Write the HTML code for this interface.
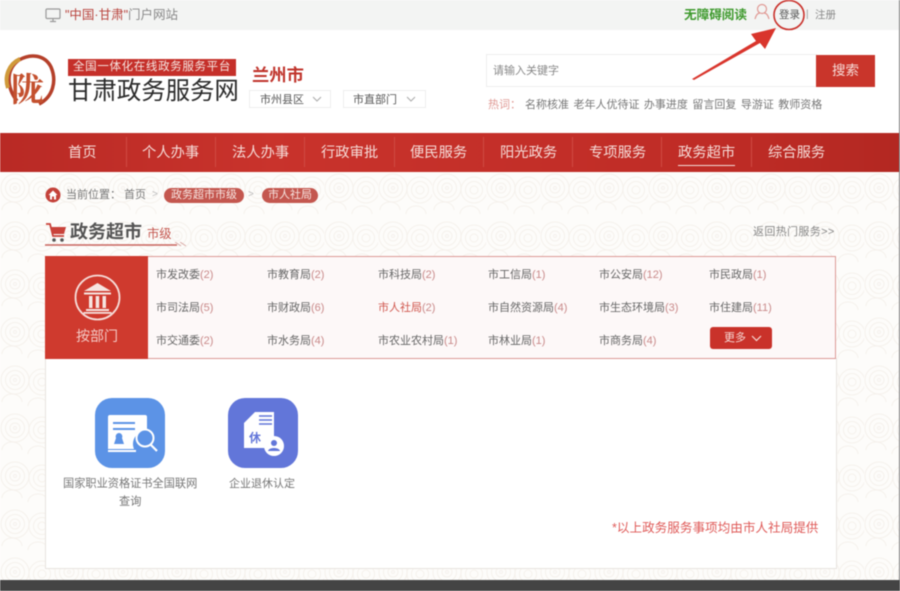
<!DOCTYPE html>
<html lang="zh"><head><meta charset="utf-8"><style>
*{margin:0;padding:0;box-sizing:border-box}
html,body{width:900px;height:591px;overflow:hidden;background:#fff}
body{position:relative;font-family:"Liberation Sans","Noto Sans CJK SC",sans-serif;color:#666;filter:blur(.5px)}
.a{position:absolute;white-space:nowrap;line-height:1}
.nav{position:absolute;top:146px;color:#f6dcd8;font-size:14.300px;line-height:1}
.sep{position:absolute;top:137px;width:1px;height:30px;background:#cf4a42}
.it{position:absolute;font-size:11px;line-height:1;white-space:nowrap;color:#666}
.it b{font-weight:normal;color:#c98a8a}
</style></head><body>
<svg class="a" style="left:0;top:172px" width="900" height="408">
<defs><pattern id="p" width="54" height="48" patternUnits="userSpaceOnUse">
<g fill="none" stroke="#f5f1ec" stroke-width="1">
<circle cx="15" cy="16" r="14"/><circle cx="15" cy="16" r="9.500"/><circle cx="15" cy="16" r="5"/><circle cx="15" cy="16" r="1.500"/>
<circle cx="42" cy="18" r="13"/><circle cx="42" cy="18" r="8.500"/><circle cx="42" cy="18" r="4"/>
<path d="M2 38a10 8 0 0 1 20 0M28 42a10 8 0 0 1 20 0"/></g></pattern></defs>
<rect width="900" height="408" fill="#fdfcfa"/><rect width="900" height="408" fill="url(#p)"/></svg>

<div class="a" style="left:0;top:0;width:900px;height:30px;background:#f3f4f3"></div>
<svg class="a" style="left:45px;top:8px" width="17" height="15" fill="none" stroke="#999" stroke-width="1.200"><rect x="1" y="1" width="14" height="9.500" rx="1"/><path d="M5 13.500h6M8 10.500v3"/></svg>
<div class="a" style="left:65px;top:9px;font-size:12.500px"><span style="color:#b8423c">"中国·甘肃"</span><span style="color:#888">门户网站</span></div>
<div class="a" style="left:684px;top:9px;font-size:12.600px;font-weight:bold;color:#3f9a2e">无障碍阅读</div>
<svg class="a" style="left:754px;top:3px" width="16" height="17" fill="none" stroke="#e09a95" stroke-width="1.200"><circle cx="8" cy="6" r="4.500"/><path d="M1 16c1-4 3-6 5-6M15 16c-1-4-3-6-5-6"/></svg>
<div class="a" style="left:779px;top:10px;font-size:10.500px;color:#555">登录</div>
<div class="a" style="left:806px;top:10px;font-size:10px;color:#999">|</div>
<div class="a" style="left:815px;top:10px;font-size:10.500px;color:#888">注册</div>

<svg class="a" style="left:3px;top:52px" width="54" height="56" fill="none"><path d="M14 49C4 36 2 18 16 8c12-7 26-5 32 7 6 14 2 30-12 37" stroke="#b5402a" stroke-width="3.500"/><path d="M5 36C1 24 6 12 17 7" stroke="#d09a3a" stroke-width="4"/><text x="8" y="49" font-size="33" font-family="Liberation Serif,Noto Serif CJK SC,serif" font-weight="bold" fill="#c4512f">陇</text></svg>
<div class="a" style="left:68px;top:59px;width:168px;height:17px;background:#c5302a;color:#f6e4e0;font-size:11.500px;line-height:17px;text-align:center;letter-spacing:.65px">全国一体化在线政务服务平台</div>
<div class="a" style="left:68px;top:80px;font-size:24.500px;color:#2b2b2b;letter-spacing:-.1px">甘肃政务服务网</div>
<div class="a" style="left:252px;top:67px;font-size:17.300px;font-weight:bold;color:#c0342c">兰州市</div>
<div class="a" style="left:249px;top:90px;width:82px;height:18px;border:1px solid #eee;background:#fff;font-size:11px;line-height:18px;padding-left:10px;color:#555">市州县区</div>
<div class="a" style="left:343px;top:90px;width:83px;height:18px;border:1px solid #eee;background:#fff;font-size:11px;line-height:18px;padding-left:9px;color:#555">市直部门</div>
<svg class="a" style="left:312px;top:96px" width="116" height="8" fill="none" stroke="#aaa"><path d="M1 1l4 4 4-4M95 1l4 4 4-4"/></svg>

<div class="a" style="left:486px;top:54px;width:331px;height:33px;border:1px solid #eee;background:#fff;font-size:11px;line-height:33px;padding-left:6px;color:#888">请输入关键字</div>
<div class="a" style="left:816px;top:55px;width:59px;height:32px;background:#c9352b;color:#f7dcd8;font-size:13.500px;line-height:32px;text-align:center">搜索</div>
<div class="a" style="left:488px;top:100px;font-size:11px;color:#e09a95">热词：</div>
<div class="a" style="left:525px;top:100px;font-size:11px;color:#777;word-spacing:1.400px">名称核准 老年人优待证 办事进度 留言回复 导游证 教师资格</div>

<svg class="a" style="left:0;top:133px" width="900" height="39"><defs><linearGradient id="g" x1="0" x2="1"><stop offset="0" stop-color="#b92a25"/><stop offset=".3" stop-color="#c9332c"/><stop offset=".8" stop-color="#bf2c26"/><stop offset="1" stop-color="#b32822"/></linearGradient></defs><rect width="900" height="39" fill="url(#g)"/></svg>
<div class="nav" style="left:68px">首页</div><div class="sep" style="left:126px"></div>
<div class="nav" style="left:142px">个人办事</div><div class="sep" style="left:215px"></div>
<div class="nav" style="left:232px">法人办事</div><div class="sep" style="left:304px"></div>
<div class="nav" style="left:321px">行政审批</div><div class="sep" style="left:394px"></div>
<div class="nav" style="left:410px">便民服务</div><div class="sep" style="left:483px"></div>
<div class="nav" style="left:500px">阳光政务</div><div class="sep" style="left:572px"></div>
<div class="nav" style="left:589px">专项服务</div><div class="sep" style="left:661px"></div>
<div class="nav" style="left:678px">政务超市</div><div class="sep" style="left:751px"></div>
<div class="a" style="left:678px;top:165px;width:57px;height:1px;background:#f3dcd8"></div>
<div class="nav" style="left:768px">综合服务</div>

<svg class="a" style="left:45px;top:187px" width="16" height="16"><circle cx="8" cy="8" r="7.500" fill="#c4423a"/><path d="M3.500 8L8 3.500 12.500 8h-1.500v4.500H9V9.500H7v3H5V8z" fill="#fff"/></svg>
<div class="a" style="left:66px;top:190px;font-size:11px;color:#777">当前位置：</div>
<div class="a" style="left:124px;top:190px;font-size:11px;color:#777">首页</div>
<div class="a" style="left:152px;top:190px;font-size:10px;color:#bbb">&gt;</div>
<div class="a" style="left:164px;top:188px;width:80px;height:15px;border-radius:8px;background:#c4574f;color:#f7e4e0;font-size:11px;line-height:15px;text-align:center">政务超市市级</div>
<div class="a" style="left:248px;top:190px;font-size:10px;color:#bbb">&gt;</div>
<div class="a" style="left:262px;top:188px;width:56px;height:15px;border-radius:8px;background:#c4574f;color:#f7e4e0;font-size:11px;line-height:15px;text-align:center">市人社局</div>

<svg class="a" style="left:45px;top:221px" width="24" height="24" fill="none"><path d="M1 3h4l3 12h11" stroke="#c9423a" stroke-width="1.800"/><path d="M6 6h15l-2 7H8z" fill="#c9423a"/><circle cx="9" cy="19" r="1.800" fill="#555"/><circle cx="17" cy="19" r="1.800" fill="#555"/></svg>
<div class="a" style="left:70px;top:223px;font-size:18px;font-weight:bold;color:#555">政务超市</div>
<div class="a" style="left:147px;top:228px;font-size:12.300px;color:#c4574f">市级</div>
<svg class="a" style="left:45px;top:242px" width="145" height="7" fill="none"><path d="M0 3h132" stroke="#c9655e" stroke-width="1.500"/><path d="M130 0l6 4M135 0l6 4" stroke="#d9a9a5"/></svg>
<div class="a" style="left:753px;top:227px;font-size:11px;color:#888;letter-spacing:.35px">返回热门服务&gt;&gt;</div>

<div class="a" style="left:45px;top:358px;width:792px;height:211px;background:#fff;border:1px solid #e8e4e0;border-top:0"></div>
<div class="a" style="left:45px;top:256px;width:791px;height:103px;background:#fdf8f8;border:1px solid #dc9a96"></div>
<div class="a" style="left:45px;top:256px;width:103px;height:103px;background:#cf3a2e"></div>
<svg class="a" style="left:74px;top:274px" width="48" height="48" fill="none"><circle cx="23.500" cy="23.500" r="22" stroke="#f6dcd8" stroke-width="1.800"/><path d="M23.500 9L37 17H10z" fill="#f6e4e0"/><path d="M10 18.500h27v2H10zM12 35h23v2H12zM9.500 38h28v1.800H9.500z" fill="#f6e4e0"/><path d="M15 22h3.500v12H15zM21.700 22h3.500v12h-3.500zM28.500 22H32v12h-3.500z" fill="#f6e4e0"/></svg>
<div class="a" style="left:76px;top:329px;font-size:14px;color:#f3c9c4">按部门</div>

<div class="it" style="left:156px;top:270px">市发改委<b>(2)</b></div>
<div class="it" style="left:267px;top:270px">市教育局<b>(2)</b></div>
<div class="it" style="left:378px;top:270px">市科技局<b>(2)</b></div>
<div class="it" style="left:488px;top:270px">市工信局<b>(1)</b></div>
<div class="it" style="left:599px;top:270px">市公安局<b>(12)</b></div>
<div class="it" style="left:709px;top:270px">市民政局<b>(1)</b></div>
<div class="it" style="left:156px;top:303px">市司法局<b>(5)</b></div>
<div class="it" style="left:267px;top:303px">市财政局<b>(6)</b></div>
<div class="it" style="left:378px;top:303px;color:#d0574e">市人社局<b>(2)</b></div>
<div class="it" style="left:488px;top:303px">市自然资源局<b>(4)</b></div>
<div class="it" style="left:599px;top:303px">市生态环境局<b>(3)</b></div>
<div class="it" style="left:709px;top:303px">市住建局<b>(11)</b></div>
<div class="it" style="left:156px;top:336px">市交通委<b>(2)</b></div>
<div class="it" style="left:267px;top:336px">市水务局<b>(4)</b></div>
<div class="it" style="left:378px;top:336px">市农业农村局<b>(1)</b></div>
<div class="it" style="left:488px;top:336px">市林业局<b>(1)</b></div>
<div class="it" style="left:599px;top:336px">市商务局<b>(4)</b></div>
<div class="a" style="left:710px;top:327px;width:62px;height:22px;border-radius:3px;background:#c9322a;color:#f6d8d4;font-size:11px;line-height:22px;padding-left:14px">更多</div>
<svg class="a" style="left:751px;top:335px" width="12" height="8" fill="none" stroke="#f6d8d4" stroke-width="1.200"><path d="M1 1l4.500 4.500L10 1"/></svg>

<svg class="a" style="left:95px;top:398px" width="70" height="70"><rect width="70" height="70" rx="17" fill="#5c93e6"/><path d="M13 19a2 2 0 0 1 2-2h35a2 2 0 0 1 2 2v14a13 13 0 0 0-13 18H13z" fill="#fff"/><path d="M18 24h22v2H18zM18 30h22v2H18z" fill="#5c93e6"/><path d="M24 35a3.500 3.500 0 0 1 3 5l2 6H19l2-6a3.500 3.500 0 0 1 3-5z" fill="#5c93e6"/><path d="M13 52h28v2H13z" fill="#fff"/><circle cx="50" cy="40" r="8.500" fill="#5c93e6" stroke="#fff" stroke-width="2"/><path d="M56 47l6 6" stroke="#fff" stroke-width="2.200"/></svg>
<svg class="a" style="left:228px;top:398px" width="70" height="70"><rect width="70" height="70" rx="17" fill="#6276d9"/><path d="M27 14h19v26h-4l-2 10H16V25z" fill="#fff"/><path d="M31 18h13M31 22h13M31 26h13" stroke="#6276d9" stroke-width="1.500"/><circle cx="46" cy="48" r="10" fill="#fff"/><circle cx="46" cy="45" r="3" fill="#6276d9"/><path d="M40 53c1-4 11-4 12 0z" fill="#6276d9"/><text x="21" y="44" font-size="12" font-weight="bold" fill="#6276d9" font-family="Liberation Sans,Noto Sans CJK SC,sans-serif">休</text></svg>
<div class="a" style="left:63px;top:479px;font-size:11.200px;color:#777">国家职业资格证书全国联网</div>
<div class="a" style="left:119px;top:497px;font-size:11.200px;color:#777">查询</div>
<div class="a" style="left:229px;top:479px;font-size:11px;color:#777">企业退休认定</div>
<div class="a" style="left:612px;top:522px;font-size:12.600px;color:#df5a58">*以上政务服务事项均由市人社局提供</div>

<div class="a" style="left:0;top:580px;width:900px;height:11px;background:#444"></div>

<svg class="a" style="left:685px;top:0" width="125" height="85" fill="none"><ellipse cx="104" cy="15" rx="15" ry="14.500" stroke="#c9302a" stroke-width="1.600"/><path d="M7 79L71 41l-5-7 25-6-11 21-5-6L9 80z" fill="#d9352c"/></svg>
<div class="a" style="left:899px;top:0;width:1px;height:580px;background:#777"></div>
</body></html>
